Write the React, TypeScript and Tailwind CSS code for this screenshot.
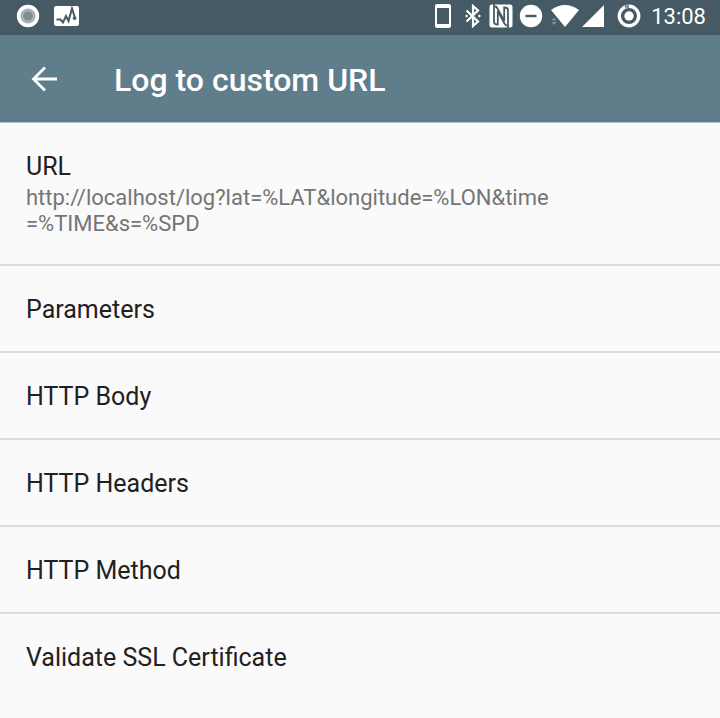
import React from "react";

const settings = [
  { title: "URL", summary: ["http://localhost/log?lat=%LAT&longitude=%LON&time", "=%TIME&s=%SPD"] },
  { title: "Parameters" },
  { title: "HTTP Body" },
  { title: "HTTP Headers" },
  { title: "HTTP Method" },
  { title: "Validate SSL Certificate" },
];

function StatusBar() {
  return (
    <div className="flex h-[35px] items-start justify-between bg-[#455a64] pr-3.5 pl-4 text-white">
      <div className="flex h-8 items-center gap-3">
        <svg className="size-6" viewBox="0 0 24 24" aria-hidden="true">
          <circle cx="12" cy="12" r="11.2" fill="#fff" />
          <circle cx="12" cy="12" r="7.6" fill="#a6b1b6" />
          <circle cx="12" cy="12" r="4.6" fill="#7d8d95" />
        </svg>
        <svg className="h-6 w-7" viewBox="0 0 28 24" aria-hidden="true">
          <rect x="2" y="2" width="25" height="20" rx="2" fill="#fff" />
          <path d="M4.5 15.5h4l2.5 3 3-6.5 2.5 5 3.500-12.500 3 9.500" fill="none" stroke="#455a64" strokeWidth="2" />
          <circle cx="22.6" cy="14.3" r="1.8" fill="#455a64" />
        </svg>
      </div>
      <div className="flex h-8 items-center">
        <svg className="h-6 w-5" viewBox="0 0 20 24" aria-hidden="true">
          <path fillRule="evenodd" fill="#fff" d="M4 0h12a2 2 0 0 1 2 2v20a2 2 0 0 1-2 2H4a2 2 0 0 1-2-2V2a2 2 0 0 1 2-2ZM4 4v16h12V4Z" />
        </svg>
        <svg className="ml-2.5 h-6 w-5" viewBox="0 0 20 24" aria-hidden="true">
          <path d="M3.5 6.5 15 17.5 10 22V2L15 6.5 3.5 17.5" fill="none" stroke="#fff" strokeWidth="2.2" />
          <circle cx="3.6" cy="12" r="1.2" fill="#fff" />
          <circle cx="16.4" cy="12" r="1.2" fill="#fff" />
        </svg>
        <svg className="ml-1.5 size-6" viewBox="0 0 24 24" aria-hidden="true">
          <rect x=".5" y=".5" width="23" height="23" rx="2.5" fill="#fff" />
          <path d="M5 0V18Q5 20.500 8.800 20.500V7L15.500 19.500Q16.500 21.500 18 21.500" fill="none" stroke="#455a64" strokeWidth="1.8" />
          <path d="M19 24V6Q19 3.500 15.200 3.500V17L8.500 4.500Q7.500 2.500 6 2.500" fill="none" stroke="#455a64" strokeWidth="1.8" />
        </svg>
        <svg className="ml-1.5 size-6" viewBox="0 0 24 24" aria-hidden="true">
          <circle cx="12" cy="12" r="11.2" fill="#fff" />
          <path d="M6.5 12h11" stroke="#455a64" strokeWidth="2.4" />
        </svg>
        <svg className="ml-1.5 h-6 w-8" viewBox="0 0 32 24" aria-hidden="true">
          <path d="M2 6Q16-4 30 6L16 23Z" fill="#fff" />
          <path d="m5 13.5 2.5 3h-5ZM5 21l2.5-3h-5Z" fill="#82929a" />
        </svg>
        <svg className="size-6" viewBox="0 0 24 24" aria-hidden="true">
          <path d="M23 1v22H1Z" fill="#fff" />
        </svg>
        <svg className="ml-3 size-6" viewBox="0 0 24 24" aria-hidden="true">
          <circle cx="12" cy="12" r="9.7" fill="none" stroke="#fff" strokeWidth="3.4" />
          <path d="M8 3.2A9.7 9.7 0 0 1 12 2.3" fill="none" stroke="#82929a" strokeWidth="3.4" />
          <circle cx="12" cy="12" r="4.7" fill="#fff" />
        </svg>
        <time className="ml-2.5 pt-0.5 text-[22px] leading-8">13:08</time>
      </div>
    </div>
  );
}

export default function App() {
  return (
    <div className="min-h-screen bg-[#fafafa] font-[Roboto,sans-serif] text-[#212121]">
      <StatusBar />
      <header className="flex h-[88px] items-center border-b border-[#b5c3ca] bg-[#607d8b] text-white">
        <button type="button" aria-label="Back" className="ml-8 size-6">
          <svg className="size-full overflow-visible" viewBox="0 0 24 24" aria-hidden="true">
            <path d="M25 12H2M13 .5 1.5 12 13 23.5" fill="none" stroke="#fff" strokeWidth="2.8" />
          </svg>
        </button>
        <h1 className="ml-[58px] pt-0.5 text-[32px] leading-10 font-medium">Log to custom URL</h1>
      </header>
      <main className="divide-y-2 divide-[#dcdcdc]">
        {settings.map(({ title, summary }) => (
          <button
            key={title}
            type="button"
            className="block w-full px-[26px] pt-[29px] pb-[27px] text-left"
          >
            <span className="block text-[25px] leading-[29px]">{title}</span>
            {summary && (
              <span className="mt-1 block text-[22px] leading-[26px] text-[#757575]">
                {summary.map((line) => (
                  <span key={line} className="block">{line}</span>
                ))}
              </span>
            )}
          </button>
        ))}
      </main>
    </div>
  );
}
